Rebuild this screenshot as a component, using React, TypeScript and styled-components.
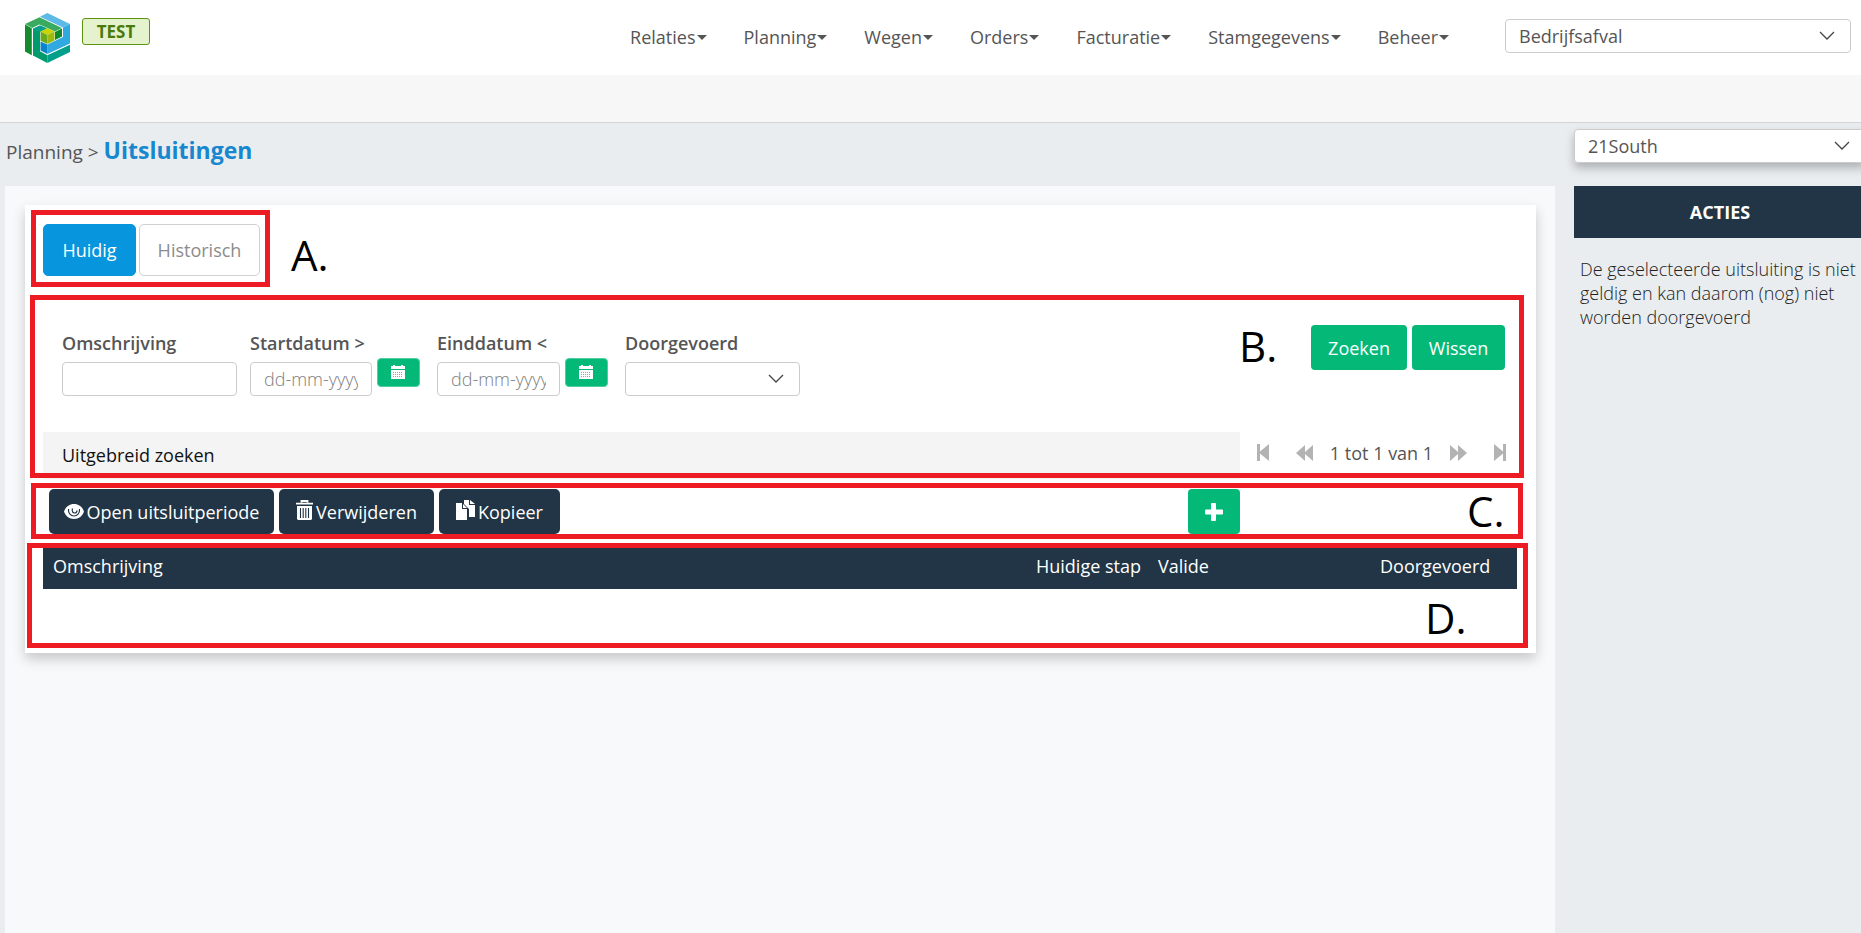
import React from "react";
import styled, { createGlobalStyle } from "styled-components";

const Global = createGlobalStyle`
  *, *::before, *::after { box-sizing: border-box; }
  html, body, #root { height: 100%; }
  body {
    margin: 0;
    background: #e9edf0;
    color: #555;
    font-family: "Open Sans", "Noto Sans", sans-serif;
    font-size: 18px;
    line-height: 24px;
    overflow-x: hidden;
  }
  button, input, select { font: inherit; color: inherit; margin: 0; }
`;

const Page = styled.div`
  display: flex;
  flex-direction: column;
  min-height: 100%;
  overflow: hidden;
`;

const Header = styled.header`
  display: flex;
  height: 75px;
  padding: 0 10px 0 25px;
  background: #fff;
`;

const Brand = styled.a`
  display: flex;
  align-items: flex-start;
  gap: 12px;
  padding-top: 13px;
  text-decoration: none;
`;

const Badge = styled.span`
  margin-top: 5px;
  width: 68px;
  height: 27px;
  border: 1px solid #5b9410;
  border-radius: 3px;
  background: #e4f3cd;
  color: #4b7a0c;
  font-size: 17px;
  font-weight: 700;
  line-height: 25px;
  text-align: center;
`;

const Nav = styled.nav`
  display: flex;
  gap: 37px;
  margin-left: auto;
  padding-top: 25px;
`;

const NavButton = styled.button`
  display: flex;
  align-items: center;
  gap: 1px;
  height: 24px;
  padding: 0;
  border: 0;
  background: none;
  cursor: pointer;
  &::after {
    content: "";
    border: 5px solid transparent;
    border-top-color: #555;
    border-bottom: 0;
  }
`;

const SelectBox = styled.div<{ $width: string; $raised?: boolean }>`
  position: relative;
  width: ${(p) => p.$width};
  height: 34px;
  border-radius: 4px;
  box-shadow: ${(p) => (p.$raised ? "0 5px 10px rgba(0,0,0,.25)" : "none")};
  select {
    width: 100%;
    height: 100%;
    padding: 0 40px 0 13px;
    border: 1px solid #ccc;
    border-radius: 4px;
    background: #fff;
    appearance: none;
  }
  svg {
    position: absolute;
    top: 12px;
    right: 16px;
    pointer-events: none;
  }
`;

const HeaderSelect = styled.div`
  margin: 19px 0 0 56px;
`;

const SubBar = styled.div`
  height: 48px;
  background: #f7f7f7;
  border-bottom: 1px solid #d2d4d6;
`;

const Body = styled.div`
  flex: 1;
  display: grid;
  grid-template-columns: minmax(0, 1fr) 292px;
  column-gap: 19px;
  margin: 0 -5px 0 5px;
`;

const MainColumn = styled.div`
  display: flex;
  flex-direction: column;
`;

const Breadcrumb = styled.div`
  height: 63px;
  padding: 15px 0 0 1px;
  font-size: 19px;
`;

const Current = styled.strong`
  color: #1787cf;
  font-size: 23px;
  font-weight: 700;
`;

const Main = styled.main`
  flex: 1;
  padding: 19px 19px 0 20px;
  background: #f8f9fb;
`;

const Card = styled.section`
  position: relative;
  height: 448px;
  padding: 19px 19px 0 18px;
  background: #fff;
  box-shadow: 0 6px 12px rgba(0, 0, 0, 0.2);
`;

const Tabs = styled.div`
  display: flex;
  gap: 3px;
`;

const Tab = styled.button<{ $active?: boolean }>`
  width: ${(p) => (p.$active ? "93px" : "121px")};
  height: 52px;
  padding: 0;
  border: 1px solid ${(p) => (p.$active ? "#0795de" : "#d0d0d0")};
  border-radius: 5px;
  background: ${(p) => (p.$active ? "#0795de" : "#fff")};
  color: ${(p) => (p.$active ? "#fff" : "#8c8c8c")};
`;

const SearchForm = styled.form`
  display: flex;
  height: 156px;
  padding: 49px 12px 0 19px;
`;

const Fields = styled.div`
  display: flex;
  flex: 1;
  align-items: flex-start;
  padding-top: 6px;
`;

const Field = styled.div<{ $width: string }>`
  width: ${(p) => p.$width};
  label {
    display: block;
    height: 31px;
    font-weight: 600;
  }
`;

const FieldRow = styled.div`
  display: flex;
  gap: 5px;
`;

const TextInput = styled.input<{ $width: string }>`
  width: ${(p) => p.$width};
  height: 34px;
  padding: 0 13px;
  border: 1px solid #ccc;
  border-radius: 4px;
  background: #fff;
  &::placeholder { color: #808080; font-weight: 300; opacity: 1; }
`;

const CalendarButton = styled.button`
  display: flex;
  justify-content: center;
  width: 43px;
  height: 29px;
  margin-top: -4px;
  padding: 6px 2px 0 0;
  border: 1px solid #4fcfa0;
  border-radius: 4px;
  background: #04b978;
`;

const Submit = styled.div`
  display: flex;
  gap: 5px;
`;

const GreenButton = styled.button<{ $width: string }>`
  display: flex;
  align-items: center;
  justify-content: center;
  width: ${(p) => p.$width};
  height: 45px;
  padding: 0;
  border: 0;
  border-radius: 4px;
  background: #04b978;
  color: #fff;
`;

const SearchFooter = styled.div`
  display: flex;
  height: 47px;
`;

const Extended = styled.button`
  flex: 1;
  padding: 0 19px 2px;
  border: 0;
  background: #f4f4f4;
  color: #111;
  text-align: left;
`;

const Pager = styled.div`
  display: flex;
  align-items: center;
  justify-content: space-between;
  width: 277px;
  padding: 0 11px 6px 17px;
  button {
    display: flex;
    padding: 0;
    border: 0;
    background: none;
  }
`;

const PagerMiddle = styled.div`
  display: flex;
  align-items: center;
  gap: 17px;
`;

const Toolbar = styled.div`
  display: flex;
  gap: 5px;
  padding: 10px 277px 14px 6px;
`;

const DarkButton = styled.button<{ $width: string }>`
  display: flex;
  align-items: center;
  justify-content: center;
  gap: 3px;
  width: ${(p) => p.$width};
  height: 45px;
  padding: 0;
  border: 0;
  border-radius: 5px;
  background: #213546;
  color: #fff;
`;

const Spacer = styled.div`
  flex: 1;
`;

const Table = styled.table`
  width: 100%;
  border-collapse: collapse;
  table-layout: fixed;
  th {
    height: 41px;
    padding: 0 0 6px 10px;
    background: #213546;
    color: #fff;
    font-weight: inherit;
    text-align: left;
    white-space: nowrap;
  }
`;

const Column = styled.col<{ $width?: string }>`
  width: ${(p) => p.$width ?? "auto"};
`;

const Frame = styled.div<{ $top: number; $left: number; $right: string; $height: number }>`
  position: absolute;
  top: ${(p) => p.$top}px;
  left: ${(p) => p.$left}px;
  right: ${(p) => p.$right};
  height: ${(p) => p.$height}px;
  border: 5px solid #ed1c24;
  pointer-events: none;
`;

const Letter = styled.span<{ $x: string; $y: string }>`
  position: absolute;
  top: ${(p) => p.$y};
  left: ${(p) => p.$x};
  color: #000;
  font-size: 42px;
  line-height: 60px;
  pointer-events: none;
`;

const Sidebar = styled.aside`
  padding-top: 6px;
`;

const SideTitle = styled.h2`
  height: 52px;
  margin: 23px 0 0;
  background: #213546;
  color: #fff;
  font-size: 18px;
  font-weight: 700;
  line-height: 52px;
  text-align: center;
`;

const SideText = styled.p`
  margin: 19px 0 0;
  padding: 0 5px 0 6px;
  color: #222;
  font-weight: 300;
`;

const Chevron = () => (
  <svg width="16" height="10" viewBox="0 0 16 10" fill="none" stroke="#444" strokeWidth="1.3" aria-hidden="true">
    <path d="M1 1l7 7 7-7" />
  </svg>
);

const Logo = () => (
  <svg width="45" height="50" viewBox="0 0 45 50" aria-hidden="true">
    <path d="M15 3.700L22.300 0 45 11l-7 3.500z" fill="#5cb9e8" />
    <path d="M38 14.500L45 11v19.500L22.300 41v-9.500L38 24z" fill="#2fa9e0" />
    <path d="M15.500 28.500l6.800 3V41l-6.800-3.500z" fill="#0b84c9" />
    <path d="M0 11l14.500-6.800L37 15l-7 3.500-15.500-7L7.200 15z" fill="#3aab5e" />
    <path d="M0 11.500l6.800 3.700v27L0 38.500z" fill="#128c2e" />
    <path d="M30 19l7-3.500v8L30 27z" fill="#0b8a2e" />
    <path d="M8 15.800l7-3.300 7 3-7 3.300v19.500l7.300 4V50L8 42.500z" fill="#009a6d" />
    <path d="M8 15.800l7-3.300 7 3-7 3.300z" fill="#0a9f8d" />
    <path d="M22.300 42.300L45 31.700V39L22.300 50z" fill="#00a08a" />
    <path d="M15.500 18.500l6.800-3.300 7.200 3.300-7.200 3.500z" fill="#c9d400" />
    <path d="M15.500 18.500l6.800 3.500v9l-6.800-3.200z" fill="#6aaa1c" />
    <path d="M22.300 22l7.200-3.500V27.500L22.300 31z" fill="#9dbb0e" />
  </svg>
);

const Calendar = () => (
  <svg width="14" height="14" viewBox="0 0 14 14" aria-hidden="true">
    <path d="M0 1h2V0h2v1h6V0h2v1h2v3H0zM0 5h14v9H0z" fill="#fff" />
    <path d="M2 7.500h10M2 9.500h10M2 11.500h10" stroke="#04b978" strokeWidth="1" strokeDasharray="1 1" opacity=".7" />
  </svg>
);

const Eye = () => (
  <svg width="20" height="18" viewBox="0 0 20 18" aria-hidden="true">
    <path d="M10 1C5 1 1.500 4 0 8.500 1.500 13 5 16 10 16s8.500-3 10-7.500C18.500 4 15 1 10 1z" fill="#fff" />
    <path d="M4.500 6c-.5 4.500 2.500 7 5.500 7s6-2.500 5.500-7M8.500 5.500c-1 3 .5 4.500 2 4.500s2.500-1 2.500-2.500" fill="none" stroke="#213546" strokeWidth="1.200" />
  </svg>
);

const Trash = () => (
  <svg width="17" height="23" viewBox="0 0 17 23" aria-hidden="true">
    <path d="M5.500 2.500V1h6v1.500M0 3.700h17" fill="none" stroke="#fff" strokeWidth="1.800" />
    <path d="M1 6h15v13L15 20H2l-1-1z" fill="#fff" />
    <path d="M4.500 8v10M7.200 8v10M9.800 8v10M12.500 8v10" stroke="#213546" strokeWidth="1.100" />
  </svg>
);

const Copy = () => (
  <svg width="19" height="23" viewBox="0 0 19 23" aria-hidden="true">
    <path d="M8 0h5v5h6v12h-6V9L8 4z" fill="#fff" />
    <path d="M14 0l5 4h-5zM0 3h6v6h5v11H0zM7 4l4 4H7z" fill="#fff" />
  </svg>
);

const Plus = () => (
  <svg width="18" height="18" viewBox="0 0 18 18" aria-hidden="true">
    <path d="M6 1q0-1 1-1h3q1 0 1 1v5.500h6q1 0 1 1v3q0 1-1 1h-6V17q0 1-1 1H7q-1 0-1-1v-5.500H1q-1 0-1-1v-3q0-1 1-1h5z" fill="#fff" />
  </svg>
);

const Edge = ({ flip }: { flip?: boolean }) => (
  <svg width="12" height="17" viewBox="0 0 12 17" aria-hidden="true">
    <path d={flip ? "M9 0h3v17H9V9.500L0 17V0l9 7.500z" : "M3 0H0v17h3V9.500L12 17V0L3 7.500z"} fill="#b3b3b3" />
  </svg>
);

const Double = ({ flip }: { flip?: boolean }) => (
  <svg width="17" height="16" viewBox="0 0 17 16" aria-hidden="true">
    <path d={flip ? "M0 0l8 7V0l9 8-9 8V9l-8 7z" : "M17 0L9 7V0L0 8l9 8V9l8 7z"} fill="#b3b3b3" />
  </svg>
);

const menu = ["Relaties", "Planning", "Wegen", "Orders", "Facturatie", "Stamgegevens", "Beheer"];

export default function App() {
  return (
    <Page>
      <Global />
      <Header>
        <Brand href="#" aria-label="Home">
          <Logo />
          <Badge>TEST</Badge>
        </Brand>
        <Nav>
          {menu.map((item) => (
            <NavButton key={item} type="button">{item}</NavButton>
          ))}
        </Nav>
        <HeaderSelect>
          <SelectBox $width="346px">
            <select aria-label="Afdeling" defaultValue="Bedrijfsafval"><option>Bedrijfsafval</option></select>
            <Chevron />
          </SelectBox>
        </HeaderSelect>
      </Header>
      <SubBar />
      <Body>
        <MainColumn>
          <Breadcrumb>Planning &gt; <Current>Uitsluitingen</Current></Breadcrumb>
          <Main>
            <Card>
              <Tabs>
                <Tab type="button" $active>Huidig</Tab>
                <Tab type="button">Historisch</Tab>
              </Tabs>
              <SearchForm onSubmit={(e) => e.preventDefault()}>
                <Fields>
                  <Field $width="188px">
                    <label htmlFor="description">Omschrijving</label>
                    <TextInput id="description" $width="175px" />
                  </Field>
                  <Field $width="187px">
                    <label htmlFor="start">Startdatum &gt;</label>
                    <FieldRow>
                      <TextInput id="start" placeholder="dd-mm-yyyy" $width="122px" />
                      <CalendarButton type="button" aria-label="Kies startdatum"><Calendar /></CalendarButton>
                    </FieldRow>
                  </Field>
                  <Field $width="188px">
                    <label htmlFor="end">Einddatum &lt;</label>
                    <FieldRow>
                      <TextInput id="end" placeholder="dd-mm-yyyy" $width="123px" />
                      <CalendarButton type="button" aria-label="Kies einddatum"><Calendar /></CalendarButton>
                    </FieldRow>
                  </Field>
                  <Field $width="175px">
                    <label htmlFor="done">Doorgevoerd</label>
                    <SelectBox $width="175px">
                      <select id="done"><option></option></select>
                      <Chevron />
                    </SelectBox>
                  </Field>
                </Fields>
                <Submit>
                  <GreenButton type="submit" $width="96px">Zoeken</GreenButton>
                  <GreenButton type="reset" $width="93px">Wissen</GreenButton>
                </Submit>
              </SearchForm>
              <SearchFooter>
                <Extended type="button">Uitgebreid zoeken</Extended>
                <Pager>
                  <button type="button" aria-label="Eerste"><Edge /></button>
                  <PagerMiddle>
                    <button type="button" aria-label="Vorige"><Double /></button>
                    <span>1 tot 1 van 1</span>
                    <button type="button" aria-label="Volgende"><Double flip /></button>
                  </PagerMiddle>
                  <button type="button" aria-label="Laatste"><Edge flip /></button>
                </Pager>
              </SearchFooter>
              <Toolbar>
                <DarkButton type="button" $width="225px"><Eye />Open uitsluitperiode</DarkButton>
                <DarkButton type="button" $width="155px"><Trash />Verwijderen</DarkButton>
                <DarkButton type="button" $width="121px"><Copy />Kopieer</DarkButton>
                <Spacer />
                <GreenButton type="button" $width="52px" aria-label="Toevoegen"><Plus /></GreenButton>
              </Toolbar>
              <Table>
                <colgroup>
                  <Column />
                  <Column $width="122px" />
                  <Column $width="222px" />
                  <Column $width="147px" />
                </colgroup>
                <thead>
                  <tr>
                    <th scope="col">Omschrijving</th>
                    <th scope="col">Huidige stap</th>
                    <th scope="col">Valide</th>
                    <th scope="col">Doorgevoerd</th>
                  </tr>
                </thead>
              </Table>
              <Frame $top={5} $left={6} $right="calc(100% - 245px)" $height={77} />
              <Frame $top={90} $left={5} $right="12px" $height={183} />
              <Frame $top={278} $left={6} $right="13px" $height={56} />
              <Frame $top={338} $left={2} $right="8px" $height={105} />
              <Letter $x="266px" $y="20px">A.</Letter>
              <Letter $x="calc(100% - 297px)" $y="111px">B.</Letter>
              <Letter $x="calc(100% - 69px)" $y="276px">C.</Letter>
              <Letter $x="calc(100% - 111px)" $y="383px">D.</Letter>
            </Card>
          </Main>
        </MainColumn>
        <Sidebar>
          <SelectBox $width="100%" $raised>
            <select aria-label="Organisatie" defaultValue="21South"><option>21South</option></select>
            <Chevron />
          </SelectBox>
          <SideTitle>ACTIES</SideTitle>
          <SideText>De geselecteerde uitsluiting is niet geldig en kan daarom (nog) niet worden doorgevoerd</SideText>
        </Sidebar>
      </Body>
    </Page>
  );
}
